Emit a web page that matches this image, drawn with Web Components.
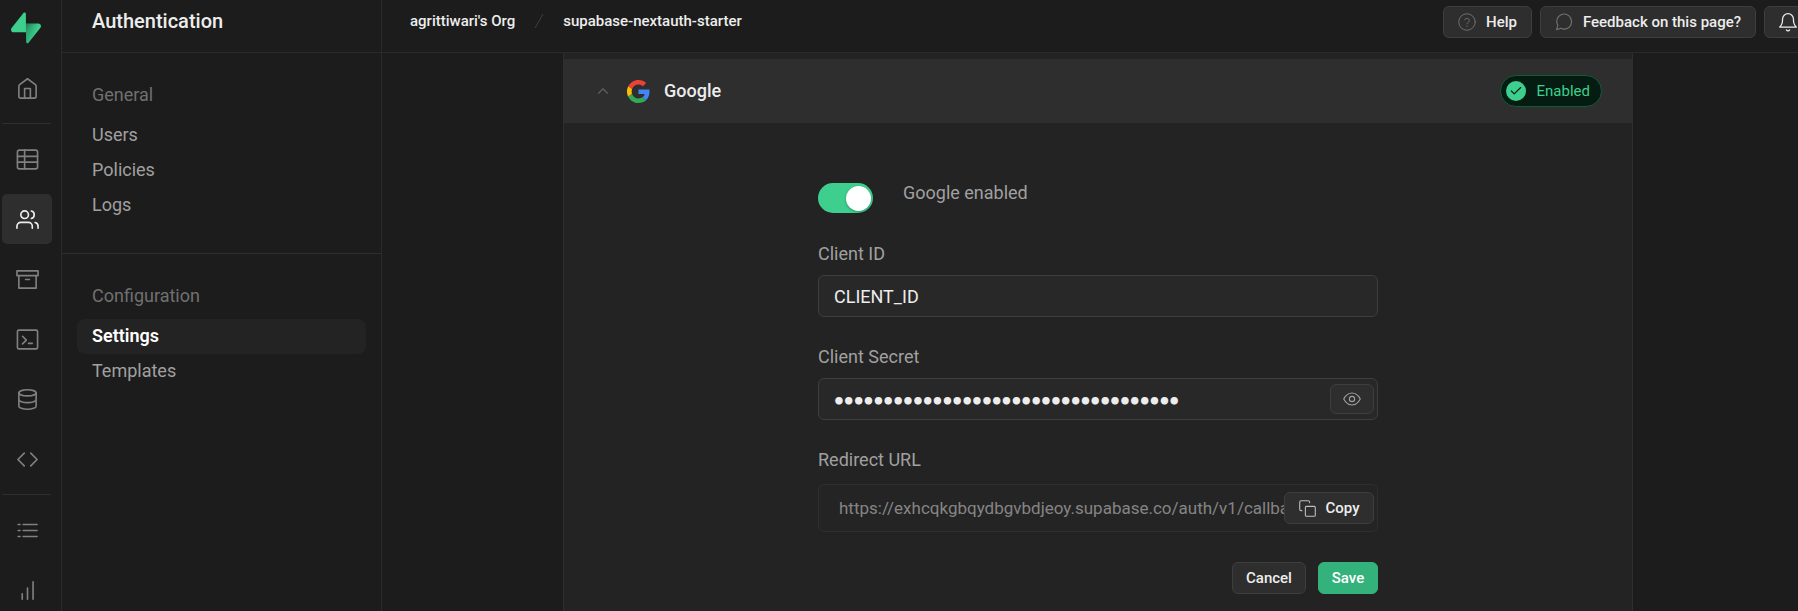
<!DOCTYPE html>
<html lang="en">
<head>
<meta charset="utf-8">
<title>Authentication | Supabase</title>
<style>
  html, body { margin: 0; height: 100%; }
  body {
    background: #1c1c1c;
    color: #ededed;
    font: 400 18px/24px Roboto, "Liberation Sans", sans-serif;
    --line: #2a2a2a;
    --line-strong: #3e3e3e;
    --surface: #232323;
    --raised: #2e2e2e;
    --muted: #707070;
    --soft: #a0a0a0;
    --brand: #3ecf8e;
  }
</style>
</head>
<body>
<auth-app></auth-app>

<script>
const ICONS = {
  home: '<path d="M3 9.5a2 2 0 0 1 .8-1.6L12 1.8l8.2 6.1a2 2 0 0 1 .8 1.6V20a2 2 0 0 1-2 2H5a2 2 0 0 1-2-2z"/><path d="M9 22V12h6v10"/>',
  table: '<rect x="1.5" y="2.2" width="21" height="19.6" rx="2"/><path d="M9 2.2v19.6M1.5 8.7h21M1.5 14.8h21"/>',
  users: '<path d="M17 21v-2a4 4 0 0 0-4-4H5a4 4 0 0 0-4 4v2"/><circle cx="9" cy="7" r="4"/><path d="M23 21v-2a4 4 0 0 0-3-3.87M16 3.13a4 4 0 0 1 0 7.75"/>',
  archive: '<path d="M21 8v13H3V8M1 3h22v5H1zM10 12h4"/>',
  terminal: '<rect x="1.5" y="2.2" width="21" height="19.6" rx="1.5"/><path d="M6.8 8.6l4 4-4 4M13 16h4"/>',
  database: '<ellipse cx="12" cy="5" rx="9" ry="3.2"/><path d="M3 5v14c0 1.7 4 3.2 9 3.2s9-1.5 9-3.2V5M3 12c0 1.7 4 3.2 9 3.2s9-1.5 9-3.2"/>',
  code: '<path d="M8.6 5.4L2 12l6.6 6.6M15.4 5.4L22 12l-6.6 6.6"/>',
  list: '<path d="M7.5 5.8h14.5M7.5 12h14.5M7.5 18.2h14.5M2.2 5.8h2M2.2 12h2M2.2 18.2h2"/>',
  bars: '<path d="M6.5 21v-5.5M12 21V9.5M17.8 21V3"/>',
  help: '<circle cx="12" cy="12" r="11"/><path d="M8.9 9.2a3.2 3.2 0 0 1 6.2 1c0 2-3.1 2.8-3.1 4.3M12 17.5v.6"/>',
  message: '<path d="M22 11.5a9.8 9.8 0 0 1-14.2 8.8L2 22.2l1.9-5.9A9.8 9.8 0 1 1 22 11.5z"/>',
  bell: '<path d="M18.5 8.5a6.5 6.5 0 0 0-13 0c0 7-3.5 9.5-3.5 9.5h20s-3.5-2.5-3.5-9.5M13.9 21.5a2.2 2.2 0 0 1-3.8 0"/>',
  chevron: '<path d="M18 15l-6-6-6 6"/>',
  check: '<path d="M20 6L9 17l-5-5"/>',
  eye: '<path d="M1 12s4-8 11-8 11 8 11 8-4 8-11 8S1 12 1 12z"/><circle cx="12" cy="12" r="3.5"/>',
  copy: '<rect x="9" y="9" width="14" height="14" rx="1.5"/><path d="M4 15H3a2 2 0 0 1-2-2V3a2 2 0 0 1 2-2h10a2 2 0 0 1 2 2v1"/>'
};

function define(name, html, setup) {
  const template = document.createElement('template');
  template.innerHTML = html;
  customElements.define(name, class extends HTMLElement {
    connectedCallback() {
      if (this.shadowRoot) return;
      const root = this.attachShadow({ mode: 'open' });
      root.append(template.content.cloneNode(true));
      if (setup) setup(this, root);
    }
  });
}

/* Line icon: name, size in px, stroke weight in viewBox units */
define('line-icon', `
  <style>
    :host { display: block; flex: none; }
    svg { display: block; fill: none; stroke: currentColor; stroke-linecap: round; stroke-linejoin: round; }
  </style>
  <svg viewBox="0 0 24 24" aria-hidden="true"></svg>`,
  (el, root) => {
    const svg = root.querySelector('svg');
    const size = el.getAttribute('size') || 23;
    svg.setAttribute('width', size);
    svg.setAttribute('height', size);
    svg.setAttribute('stroke-width', el.getAttribute('weight') || 1.7);
    svg.innerHTML = ICONS[el.getAttribute('name')];
  });

define('supabase-logo', `
  <style>:host, svg { display: block; }</style>
  <svg width="30" height="32" viewBox="0 0 109 113" fill="none" role="img" aria-label="Supabase">
    <defs>
      <linearGradient id="a" x1="54" y1="55" x2="94" y2="72" gradientUnits="userSpaceOnUse"><stop stop-color="#249361"/><stop offset="1" stop-color="#3ecf8e"/></linearGradient>
      <linearGradient id="b" x1="36" y1="31" x2="54" y2="65" gradientUnits="userSpaceOnUse"><stop/><stop offset="1" stop-opacity="0"/></linearGradient>
    </defs>
    <path d="M63.708 110.284C60.848 113.885 55.05 111.912 54.981 107.314L53.974 40.063H99.194C107.384 40.063 111.952 49.523 106.859 55.937L63.708 110.284Z" fill="url(#a)"/>
    <path d="M63.708 110.284C60.848 113.885 55.05 111.912 54.981 107.314L53.974 40.063H99.194C107.384 40.063 111.952 49.523 106.859 55.937L63.708 110.284Z" fill="url(#b)" fill-opacity=".2"/>
    <path d="M45.317 2.071C48.177-1.53 53.975.443 54.043 5.041L54.485 72.292H9.831C1.64 72.292-2.928 62.832 2.166 56.418L45.317 2.071Z" fill="#3ecf8e"/>
  </svg>`);

define('google-logo', `
  <style>:host, svg { display: block; }</style>
  <svg width="23" height="23" viewBox="0 0 48 48" aria-hidden="true">
    <path fill="#ea4335" d="M24 9.5c3.54 0 6.71 1.22 9.21 3.6l6.85-6.85C35.9 2.38 30.47 0 24 0 14.62 0 6.51 5.38 2.56 13.22l7.98 6.19C12.43 13.72 17.74 9.5 24 9.5z"/>
    <path fill="#4285f4" d="M46.98 24.55c0-1.57-.15-3.09-.38-4.55H24v9.02h12.94c-.58 2.96-2.26 5.48-4.78 7.18l7.73 6c4.51-4.18 7.09-10.36 7.09-17.65z"/>
    <path fill="#fbbc05" d="M10.53 28.59a14.5 14.5 0 0 1 0-9.18l-7.98-6.19a24 24 0 0 0 0 21.56l7.98-6.19z"/>
    <path fill="#34a853" d="M24 48c6.48 0 11.93-2.13 15.89-5.81l-7.73-6c-2.15 1.45-4.92 2.3-8.16 2.3-6.26 0-11.57-4.22-13.47-9.91l-7.98 6.19C6.51 42.62 14.62 48 24 48z"/>
  </svg>`);

/* Push button; an icon can be slotted before the caption */
define('ui-button', `
  <style>
    :host { display: block; flex: none; }
    button {
      display: flex; align-items: center; justify-content: center; gap: 10px;
      box-sizing: border-box; width: 100%; height: 32px; padding: 0 14px; margin: 0;
      border: 1px solid var(--line-strong); border-radius: 6px;
      background: var(--raised); color: #ededed;
      font: 500 15px/20px Roboto, "Liberation Sans", sans-serif; cursor: pointer; white-space: nowrap;
    }
    :host([variant=primary]) button { background: #34b27b; border-color: #34b27b; color: #fff; }
    :host([compact]) button { height: 30px; padding: 0; }
    :host([tight]) button { padding: 0 12px; }
    ::slotted(line-icon) { color: var(--icon, var(--muted)); }
  </style>
  <button type="button"><slot></slot></button>`,
  (el, root) => {
    const label = el.getAttribute('label');
    if (label) root.querySelector('button').setAttribute('aria-label', label);
  });

define('rail-link', `
  <style>
    :host { display: block; }
    a { display: grid; place-items: center; width: 50px; height: 50px; border-radius: 5px; color: #808080; }
    :host([active]) a { background: var(--raised); color: #ededed; }
  </style>
  <a href="#"></a>`,
  (el, root) => {
    const a = root.querySelector('a');
    a.setAttribute('aria-label', el.getAttribute('label'));
    a.innerHTML = `<line-icon name="${el.getAttribute('icon')}"></line-icon>`;
  });

define('app-rail', `
  <style>
    :host { display: block; border-right: 1px solid var(--line); overflow: hidden; }
    nav { display: flex; flex-direction: column; gap: 10px; padding: 12px 9px 0 2px; }
    supabase-logo { padding: 0 0 9px 9px; }
    hr { width: 49px; height: 1px; margin: 0; border: 0; background: var(--raised); }
  </style>
  <nav aria-label="Project">
    <supabase-logo></supabase-logo>
    <rail-link icon="home" label="Home"></rail-link>
    <hr>
    <rail-link icon="table" label="Table editor"></rail-link>
    <rail-link icon="users" label="Authentication" active></rail-link>
    <rail-link icon="archive" label="Storage"></rail-link>
    <rail-link icon="terminal" label="SQL editor"></rail-link>
    <rail-link icon="database" label="Database"></rail-link>
    <rail-link icon="code" label="Edge functions"></rail-link>
    <hr>
    <rail-link icon="list" label="Logs"></rail-link>
    <rail-link icon="bars" label="Reports"></rail-link>
  </nav>`);

define('side-link', `
  <style>
    :host { display: block; }
    a { display: block; padding: 0 15px 2px; border-radius: 8px; line-height: 33px; color: var(--soft); text-decoration: none; }
    :host([active]) a { background: var(--surface); color: #fff; font-weight: 600; }
  </style>
  <a href="#"><slot></slot></a>`);

define('side-group', `
  <style>
    :host { display: block; padding: 30px 15px; border-bottom: 1px solid var(--raised); }
    :host(:last-child) { border-bottom: 0; }
    h2 { margin: 0 0 11px; padding: 0 15px; font: inherit; color: var(--muted); }
  </style>
  <h2></h2><slot></slot>`,
  (el, root) => { root.querySelector('h2').textContent = el.getAttribute('heading'); });

define('side-menu', `
  <style>
    :host { display: block; border-right: 1px solid var(--line); overflow: hidden; }
    h1 {
      margin: 0; padding: 6px 30px 16px; border-bottom: 1px solid var(--line);
      font-size: 20px; font-weight: 500; line-height: 30px;
    }
  </style>
  <h1>Authentication</h1>
  <nav aria-label="Authentication">
    <side-group heading="General">
      <side-link>Users</side-link><side-link>Policies</side-link><side-link>Logs</side-link>
    </side-group>
    <side-group heading="Configuration">
      <side-link active>Settings</side-link><side-link>Templates</side-link>
    </side-group>
  </nav>`);

define('top-bar', `
  <style>
    :host {
      display: flex; justify-content: space-between; align-items: flex-start;
      padding: 6px 0 14px 28px; border-bottom: 1px solid var(--line); overflow: hidden;
    }
    nav { display: flex; align-items: center; gap: 19px; height: 30px; font-size: 15px; font-weight: 500; line-height: 20px; }
    a { color: inherit; text-decoration: none; }
    .slash { display: block; stroke: #3e3e3e; }
    .actions { display: flex; gap: 8px; margin-right: -14px; }
    .bell { width: 48px; --icon: #ededed; }
  </style>
  <nav aria-label="Breadcrumb">
    <a href="#">agrittiwari's Org</a>
    <svg class="slash" width="10" height="16" viewBox="0 0 10 16" aria-hidden="true"><path d="M1 15L9 1"/></svg>
    <a href="#">supabase-nextauth-starter</a>
  </nav>
  <div class="actions">
    <ui-button><line-icon name="help" size="18" weight="1.3"></line-icon>Help</ui-button>
    <ui-button><line-icon name="message" size="18" weight="1.5"></line-icon>Feedback on this page?</ui-button>
    <ui-button class="bell" label="Notifications"><line-icon name="bell" size="20" weight="1.5"></line-icon></ui-button>
  </div>`);

define('status-badge', `
  <style>
    :host {
      display: flex; align-items: center; gap: 11px; box-sizing: border-box; height: 32px;
      padding: 0 11px 0 5px; border: 1px solid #15593b; border-radius: 16px;
      background: #041c11; color: var(--brand); font-size: 15px; line-height: 20px;
    }
    i { display: grid; place-items: center; width: 20px; height: 20px; border-radius: 50%; background: var(--brand); color: #041c11; }
  </style>
  <i><line-icon name="check" size="14" weight="2"></line-icon></i><slot></slot>`);

define('toggle-field', `
  <style>
    :host { display: flex; align-items: flex-start; gap: 30px; height: 31px; color: var(--soft); }
    input {
      appearance: none; flex: none; display: flex; justify-content: flex-end; align-items: center;
      box-sizing: border-box; width: 55px; height: 30px; margin: 0; padding: 2px;
      border-radius: 15px; background: #505050; cursor: pointer;
    }
    input:not(:checked) { justify-content: flex-start; }
    input:checked { background: var(--brand); }
    input::before { content: ""; width: 25px; height: 25px; border-radius: 50%; background: #fff; box-shadow: 0 1px 3px #0004; }
    label { line-height: 20px; }
  </style>
  <input id="control" type="checkbox" role="switch" checked>
  <label for="control"><slot></slot></label>`);

/* Labelled text box; the slotted button lies over its right end */
define('text-field', `
  <style>
    :host { display: grid; gap: 9px; }
    label { color: var(--soft); }
    .box { display: grid; align-items: center; }
    input, ::slotted(*) { grid-area: 1 / 1; }
    ::slotted(*) { justify-self: end; margin-right: 4px; }
    input {
      box-sizing: border-box; width: 100%; height: 42px; margin: 0; padding: 0 15px;
      border: 1px solid var(--line-strong); border-radius: 6px; outline: 0;
      background: #282828; color: #ededed; font: inherit;
    }
    input[type=password] { font-family: Lato, sans-serif; font-size: 17px; font-weight: 700; }
    input:read-only { height: 48px; padding: 0 20px; border-color: var(--raised); background: #242424; color: #858585; font-size: 17px; }
    :host([readonly]) { gap: 12px; }
  </style>
  <label for="control"></label>
  <div class="box"><input id="control" type="text"><slot></slot></div>`,
  (el, root) => {
    const input = root.querySelector('input');
    root.querySelector('label').textContent = el.getAttribute('label');
    input.type = el.getAttribute('type') || 'text';
    input.readOnly = el.hasAttribute('readonly');
    input.value = el.getAttribute('value');
  });

define('provider-panel', `
  <style>
    :host {
      display: block; margin: 0 165px 0 181px; padding-top: 6px; background: var(--surface);
      border: solid var(--raised); border-width: 0 1px;
    }
    header { display: flex; align-items: center; height: 64px; padding: 0 30px; background: var(--raised); }
    header line-icon { margin-right: 15px; color: #606060; }
    h2 { flex: 1; margin: 0 0 0 14px; font-size: 18px; font-weight: 500; }
    form { display: grid; gap: 28px; max-width: 560px; margin: 0 auto; padding: 60px 0; }
    footer { display: flex; justify-content: flex-end; gap: 12px; margin-top: 2px; }
    .eye { width: 44px; --icon: #a0a0a0; }
    .copy { width: 90px; --icon: #c0c0c0; }
    .cancel { width: 74px; }
    .save { width: 60px; }
  </style>
  <header>
    <line-icon name="chevron" size="18" weight="1.5"></line-icon>
    <google-logo></google-logo>
    <h2>Google</h2>
    <status-badge>Enabled</status-badge>
  </header>
  <form>
    <toggle-field>Google enabled</toggle-field>
    <text-field label="Client ID" value="CLIENT_ID"></text-field>
    <text-field label="Client Secret" type="password" value="client-secret-client-secret-client-">
      <ui-button class="eye" label="Reveal" compact><line-icon name="eye" size="18" weight="1.5"></line-icon></ui-button>
    </text-field>
    <text-field label="Redirect URL" readonly value="https://exhcqkgbqydbgvbdjeoy.supabase.co/auth/v1/callback">
      <ui-button class="copy" tight><line-icon name="copy" size="17" weight="1.5"></line-icon>Copy</ui-button>
    </text-field>
    <footer>
      <ui-button class="cancel" tight>Cancel</ui-button>
      <ui-button class="save" variant="primary" tight>Save</ui-button>
    </footer>
  </form>`);

define('auth-app', `
  <style>
    :host { display: grid; grid-template-columns: 62px 320px minmax(0, 1fr); height: 100vh; overflow: hidden; }
    main { display: flex; flex-direction: column; min-height: 0; overflow: hidden; }
    top-bar { flex: none; }
    provider-panel { flex: 1 0 auto; }
  </style>
  <app-rail></app-rail>
  <side-menu></side-menu>
  <main><top-bar></top-bar><provider-panel></provider-panel></main>`);
</script>
</body>
</html>
